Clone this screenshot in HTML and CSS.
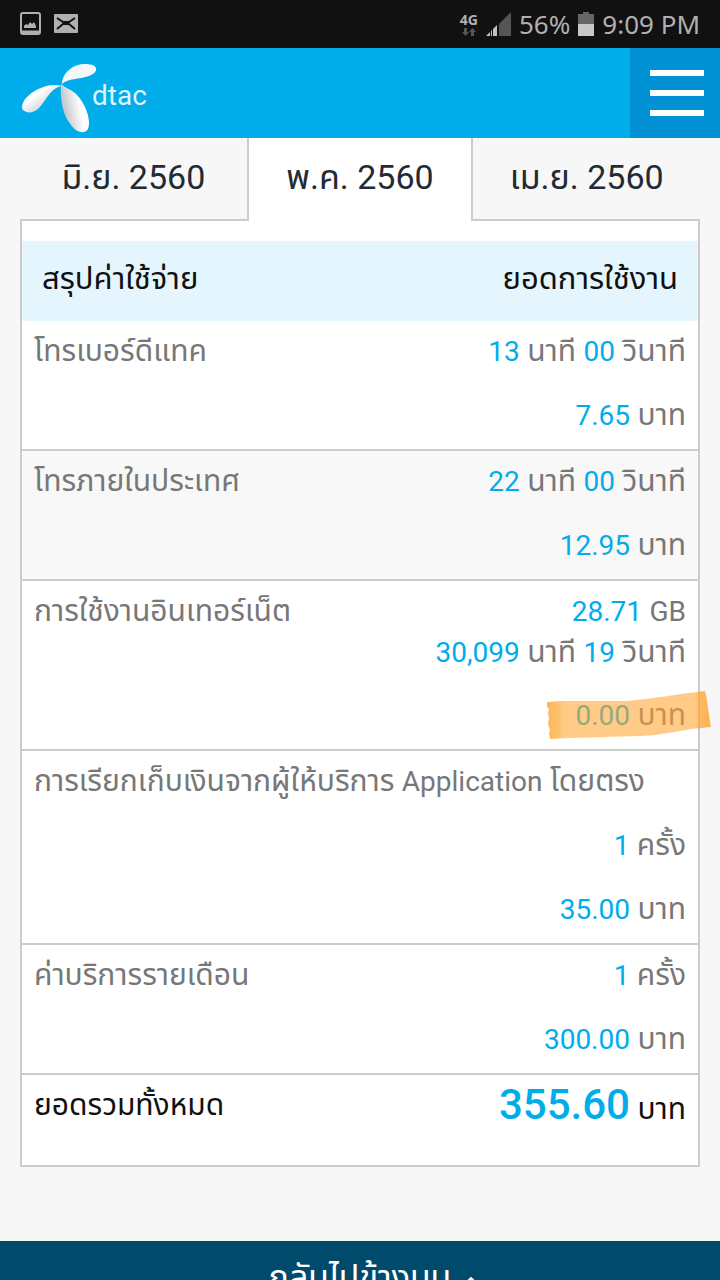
FILE: index.html
```
<!doctype html>
<html lang="th">
<head>
<meta charset="utf-8">
<meta name="viewport" content="width=device-width, initial-scale=1">
<title>dtac</title>
<link rel="stylesheet" href="styles.css">
</head>

<body>
<div class="status">
	<svg class="status-icon" width="60" height="26" viewBox="0 0 60 26">
		<rect x="1" y="2" width="19" height="21" rx="2" fill="none" stroke="#b0b0b0" stroke-width="2"/>
		<path d="M1 21H20" stroke="#b0b0b0" stroke-width="3"/>
		<path d="M4 17V15L6 13L8 14L10 11L12 13L14 11L16 15V17Z" fill="#b0b0b0"/>
		<rect x="34" y="3" width="24" height="19" rx="1" fill="#b0b0b0"/>
		<path d="M37 7L43 11H49L55 7M37 18L43 13H49L55 18" fill="none" stroke="#111" stroke-width="2"/>
	</svg>
	<div class="network">4G
		<svg width="14" height="8" viewBox="0 0 14 8"><path d="M2 0H5V4H7L3.500 8L0 4H2ZM9 8H12V4H14L10.500 0L7 4H9Z" fill="#555"/></svg>
	</div>
	<svg width="25" height="24" viewBox="0 0 25 24">
		<path d="M13 12L25 0V24H13Z" fill="#555"/>
		<path d="M0 24L4 20V24ZM5 19L6 18V24H5ZM7 17L11 13V24H7Z" fill="#c0c0c0"/>
	</svg>
	<span class="battery-text">56%</span>
	<svg width="16" height="24" viewBox="0 0 16 24">
		<path d="M0 2H5V0H11V2H16V12H0Z" fill="#666"/>
		<path d="M0 12H16V24H0Z" fill="#c8c8c8"/>
	</svg>
	<span class="clock">9:09 PM</span>
</div>

<header class="header">
	<a class="logo" href="#">
		<svg width="76" height="72" viewBox="0 0 76 72">
			<defs>
				<linearGradient id="left" x1="0" y1="0" x2="1" y2="1">
					<stop offset="0.350" stop-color="#fff"/>
					<stop offset="0.750" stop-color="#c9cdd2"/>
				</linearGradient>
				<linearGradient id="down" x1="1" y1="0" x2="0" y2="0.300">
					<stop offset="0.400" stop-color="#fff"/>
					<stop offset="1" stop-color="#bfc4c9"/>
				</linearGradient>
			</defs>
			<path d="M41 20C43 9 53 2 64 2C71 2 76 4 75 8C74 14 61 16 54 17C48 18 44 19 41 22Z" fill="#f5f8fa"/>
			<path d="M41 24C28 20 12 28 5 36C1 41 0 46 2 48C6 52 13 51 18 46C25 39 29 26 41 24Z" fill="url(#left)"/>
			<path d="M40 22C39 36 41 52 50 63C55 70 63 73 67 67C71 57 63 39 54 31C49 27 44 26 40 22Z" fill="url(#down)"/>
		</svg>
		<span>dtac</span>
	</a>
	<button class="menu" type="button" aria-label="เมนู"><i></i><i></i><i></i></button>
</header>

<main class="content">
	<nav class="tabs">
		<a href="#">มิ.ย. 2560</a>
		<a href="#" class="active">พ.ค. 2560</a>
		<a href="#">เม.ย. 2560</a>
	</nav>
	<div class="panel">
		<table class="bill">
			<thead>
				<tr><th>สรุปค่าใช้จ่าย</th><th>ยอดการใช้งาน</th></tr>
			</thead>
			<tbody>
				<tr>
					<td>โทรเบอร์ดีแทค</td>
					<td><p><b>13</b> นาที <b>00</b> วินาที</p><p><b>7.65</b> บาท</p></td>
				</tr>
				<tr class="gray">
					<td>โทรภายในประเทศ</td>
					<td><p><b>22</b> นาที <b>00</b> วินาที</p><p><b>12.95</b> บาท</p></td>
				</tr>
				<tr>
					<td>การใช้งานอินเทอร์เน็ต</td>
					<td>
						<p><b>28.71</b> <span class="en">GB</span><br><b>30,099</b> นาที <b>19</b> วินาที</p>
						<p><span class="mark"><b>0.00</b> บาท
							<svg class="tape" width="164" height="48" viewBox="0 0 164 48">
								<defs>
									<linearGradient id="tape">
										<stop offset="0" stop-color="#ffa52f" stop-opacity="0.800"/>
										<stop offset="0.070" stop-color="#ffa52f" stop-opacity="0.700"/>
										<stop offset="0.100" stop-color="#ffa52f" stop-opacity="0.580"/>
										<stop offset="0.900" stop-color="#ffa52f" stop-opacity="0.580"/>
										<stop offset="0.940" stop-color="#ffa52f" stop-opacity="0.750"/>
										<stop offset="1" stop-color="#ffa52f" stop-opacity="0.850"/>
									</linearGradient>
								</defs>
								<path d="M0 11L14 10L80 10C105 8 130 3 158 0L160 9L161 18L164 36C135 38 120 44 93 45C70 46 40 46 3 48L2 42L3 39L1 33L2 27L1 22L2 18L0 16Z" fill="url(#tape)"/>
							</svg>
						</span></p>
					</td>
				</tr>
				<tr class="long"><td colspan="2">การเรียกเก็บเงินจากผู้ให้บริการ <span class="en">Application</span> โดยตรง</td></tr>
				<tr>
					<td></td>
					<td><p><b>1</b> ครั้ง</p><p><b>35.00</b> บาท</p></td>
				</tr>
				<tr>
					<td>ค่าบริการรายเดือน</td>
					<td><p><b>1</b> ครั้ง</p><p><b>300.00</b> บาท</p></td>
				</tr>
			</tbody>
			<tfoot>
				<tr><td>ยอดรวมทั้งหมด</td><td><b>355.60</b> บาท</td></tr>
			</tfoot>
		</table>
	</div>
</main>

<footer class="footer">
	<a href="#">กลับไปข้างบน<svg width="16" height="9" viewBox="0 0 16 9"><path d="M1 8L8 1L15 8" fill="none" stroke="#fff" stroke-width="2"/></svg></a>
</footer>
</body>
</html>
```
FILE: styles.css
```
*{
	box-sizing: border-box;
}
body{
	margin: 0;
	height: 100vh;
	overflow: hidden;
	background: #f7f7f7;
	color: #777;
	font: 30px/40px Roboto, "Noto Sans Thai", "Noto Sans", sans-serif;
}
a{
	color: inherit;
	text-decoration: none;
}
p{
	margin: 0;
}
p + p{
	margin-top: 24px;
}

/* status bar */
.status{
	display: flex;
	align-items: center;
	gap: 8px;
	height: 48px;
	padding: 0 20px;
	background: #111;
	color: #b0b0b0;
	font-family: "Noto Sans", sans-serif;
	font-size: 26px;
}
.status-icon{
	margin-right: auto;
}
.network{
	display: flex;
	flex-direction: column;
	align-items: center;
	font-size: 14px;
	font-weight: bold;
	line-height: 16px;
}

/* header */
.header{
	display: flex;
	justify-content: space-between;
	height: 90px;
	background: #00adea;
}
.logo{
	display: flex;
	align-items: center;
	padding: 10px 0 0 21px;
	color: #dff5fd;
	font-size: 28px;
}
.logo span{
	margin: 0 0 4px -5px;
}
.menu{
	display: flex;
	flex-direction: column;
	justify-content: center;
	gap: 14px;
	width: 90px;
	padding: 0 16px 0 20px;
	border: none;
	background: #0092d4;
}
.menu i{
	height: 6px;
	background: #fff;
}

/* tabs */
.content{
	padding: 0 20px 74px;
}
.tabs{
	display: grid;
	grid-template-columns: 1fr 1fr 1fr;
	color: #222b33;
	font-size: 34px;
	text-align: center;
}
.tabs a{
	height: 83px;
	padding-top: 19px;
	border-bottom: 2px solid #ccc;
}
.tabs .active{
	border: solid #ccc;
	border-width: 0 2px;
	background: #fff;
}
.panel{
	padding-top: 20px;
	border: 2px solid #ccc;
	border-top: none;
	background: #fff;
}

/* bill */
.bill{
	width: 100%;
	border-collapse: separate;
	border-spacing: 0;
}
.bill th{
	height: 80px;
	padding: 0 20px 4px;
	background: #e4f5fd;
	color: #111;
	font-size: 31px;
	font-weight: normal;
	text-align: left;
}
.bill td{
	padding: 10px 12px 14px;
	border-bottom: 2px solid #ccc;
	vertical-align: top;
}
.bill th:nth-child(2),
.bill td:nth-child(2){
	text-align: right;
}
.bill p{
	height: 40px;
}
.bill p:has(br){
	height: 80px;
}
.bill b{
	color: #00adea;
	font-weight: normal;
}
.bill b,
.en{
	font-size: 28px;
}
.bill .gray td{
	background: #f8f8f8;
}
.bill .long td{
	height: 64px;
	padding-bottom: 12px;
	border: none;
}
.mark{
	position: relative;
}
.tape{
	position: absolute;
	top: -6px;
	right: -25px;
}
.bill tfoot td{
	height: 90px;
	border: none;
	color: #111;
}
.bill tfoot b{
	font-size: 42px;
	font-weight: 500;
}

/* footer */
.footer{
	padding: 16px 0;
	background: #004b6b;
	color: #fff;
	font-size: 34px;
	text-align: center;
}
.footer a{
	position: relative;
}
.footer svg{
	position: absolute;
	left: 100%;
	top: 50%;
	margin-left: 12px;
}
```
